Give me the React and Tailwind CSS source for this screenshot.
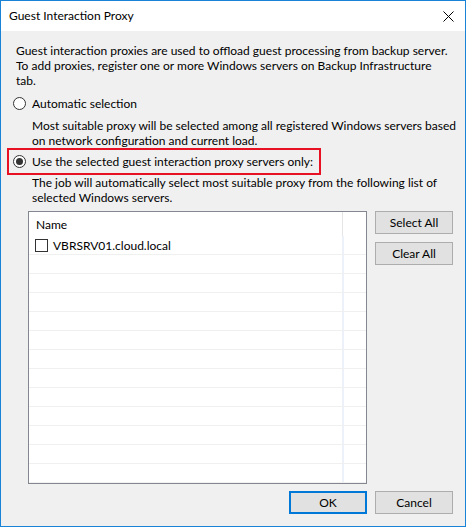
import React, { useState } from "react";

const font = { fontFamily: "Lato, 'Noto Sans', sans-serif" };

function Radio({ checked }) {
  return (
    <span className="flex h-[13px] w-[13px] shrink-0 items-center justify-center rounded-full border border-[#333333] bg-white">
      {checked && <span className="h-[7px] w-[7px] rounded-full bg-[#333333]" />}
    </span>
  );
}

function Btn({ children, primary }) {
  return (
    <button
      className={
        primary
          ? "flex h-[23px] w-[78px] items-center justify-center border-2 border-[#0078d7] bg-[#e1e1e1] text-[12px] text-black"
          : "flex h-[23px] w-[78px] items-center justify-center border border-[#adadad] bg-[#e1e1e1] text-[12px] text-black"
      }
    >
      {children}
    </button>
  );
}

export default function App() {
  const [mode] = useState("selected");
  const rows = Array.from({ length: 13 });

  return (
    <div className="flex h-[528px] w-[468px] bg-white" style={font}>
      <div className="flex h-[527px] w-[466px] flex-col border border-[#1883d7] bg-[#f0f0f0]">
        {/* title bar */}
        <div className="flex h-[30px] items-center justify-between bg-white pl-[8px] pr-[11px]">
          <span className="text-[12px] text-black">Guest Interaction Proxy</span>
          <svg width="11" height="11" viewBox="0 0 11 11">
            <path d="M0.5 0.5 L10.5 10.5 M10.5 0.5 L0.5 10.5" stroke="#000" strokeWidth="1" />
          </svg>
        </div>

        <div className="flex flex-1 flex-col whitespace-nowrap px-[6px] pt-[12px] text-[12px] leading-[15px] text-black">
          <p className="pl-[9px]">
            Guest interaction proxies are used to offload guest processing from backup server.
            <br />
            To add proxies, register one or more Windows servers on Backup Infrastructure
            <br />
            tab.
          </p>

          <div className="mt-[8px] flex items-center gap-[6px] pl-[6px]">
            <Radio checked={mode === "auto"} />
            <span>Automatic selection</span>
          </div>
          <p className="mt-[7px] pl-[25px]">
            Most suitable proxy will be selected among all registered Windows servers based
            <br />
            on network configuration and current load.
          </p>

          <div className="flex h-[27px] w-[314px] items-center gap-[6px] border-2 border-[#e81123] pl-[4px]">
            <Radio checked={mode === "selected"} />
            <span>Use the selected guest interaction proxy servers only:</span>
          </div>
          <p className="pl-[25px]">
            The job will automatically select most suitable proxy from the following list of
            <br />
            selected Windows servers.
          </p>

          <div className="mt-[6px] flex gap-[8px] pl-[21px]">
            <div className="h-[273px] w-[339px] overflow-hidden border border-[#828790] bg-white">
              <div className="flex h-[24px]">
                <div className="flex w-[313px] items-center pl-[7px]">Name</div>
                <div className="w-[1px] bg-[#e5e5e5]" />
              </div>
              {rows.map((_, i) => (
                <div key={i} className="flex h-[19px] border-b border-[#f0f0f0]">
                  <div className="flex w-[313px] items-center gap-[5px] pl-[6px]">
                    {i === 0 && (
                      <>
                        <span className="h-[13px] w-[13px] border border-[#333333] bg-white" />
                        <span>VBRSRV01.cloud.local</span>
                      </>
                    )}
                  </div>
                  <div className="w-[2px] bg-[#edf2fa]" />
                </div>
              ))}
            </div>
            <div className="flex flex-col gap-[8px]">
              <Btn>Select All</Btn>
              <Btn>Clear All</Btn>
            </div>
          </div>

          <div className="mt-[7px] flex justify-end gap-[8px] pr-[6px]">
            <Btn primary>OK</Btn>
            <Btn>Cancel</Btn>
          </div>
        </div>
      </div>
    </div>
  );
}
